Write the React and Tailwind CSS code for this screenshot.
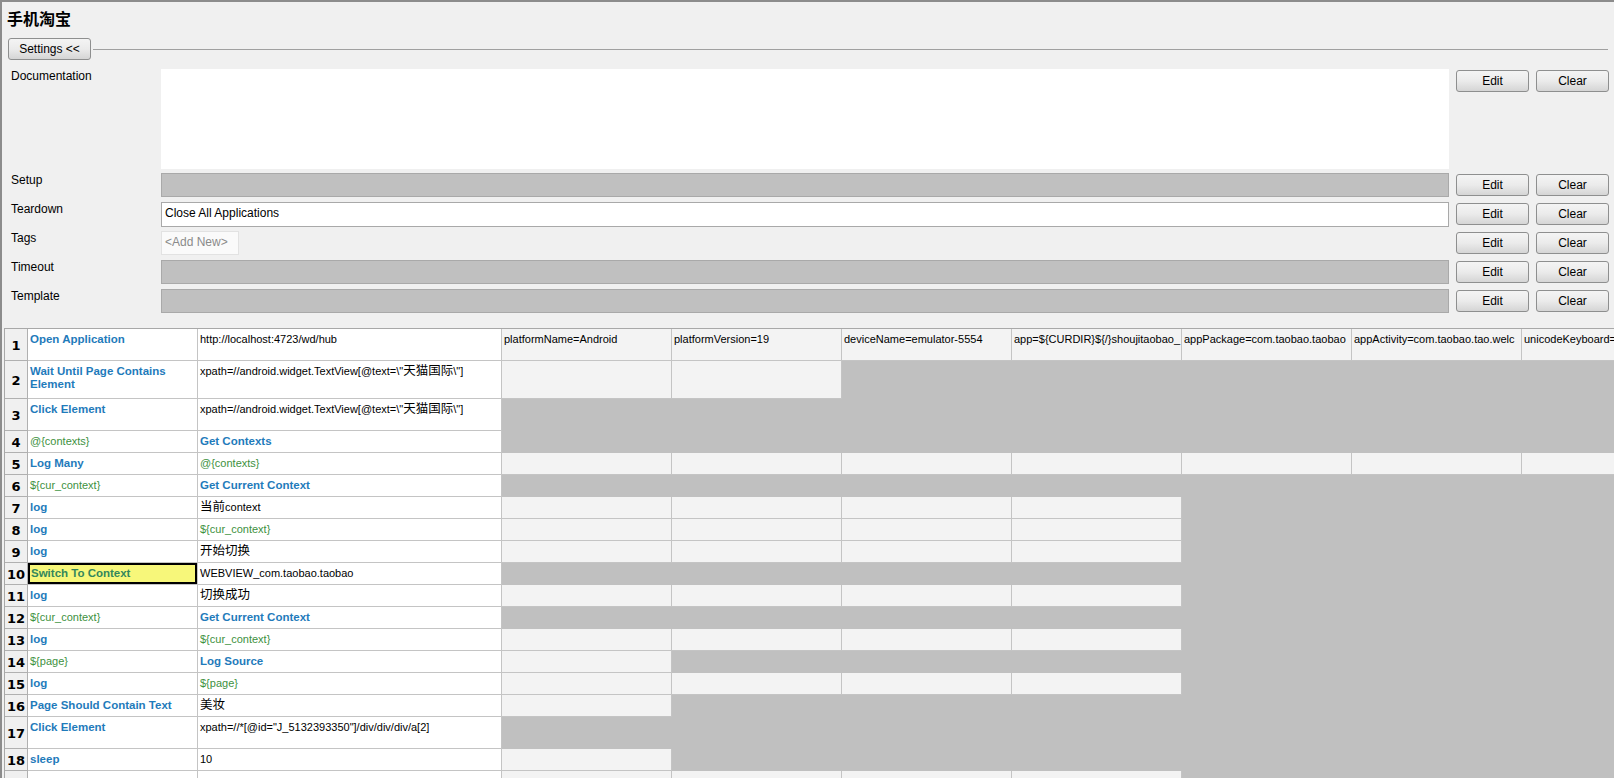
import React from 'react';

const K = (t) => ['kw', t];
const V = (t) => ['var', t];
const T = (t) => ['txt', t];

const rows = [
  { h: 'h-[32px]', active: 9, cells: [K('Open Application'), T('http://localhost:4723/wd/hub'), T('platformName=Android'), T('platformVersion=19'), T('deviceName=emulator-5554'), T('app=${CURDIR}${/}shoujitaobao_'), T('appPackage=com.taobao.taobao'), T('appActivity=com.taobao.tao.welc'), T('unicodeKeyboard=')] },
  { h: 'h-[38px]', active: 4, cells: [K('Wait Until Page Contains Element'), T('xpath=//android.widget.TextView[@text=\\"天猫国际\\"]')] },
  { h: 'h-[32px]', active: 2, cells: [K('Click Element'), T('xpath=//android.widget.TextView[@text=\\"天猫国际\\"]')] },
  { h: 'h-[22px]', active: 2, cells: [V('@{contexts}'), K('Get Contexts')] },
  { h: 'h-[22px]', active: 9, cells: [K('Log Many'), V('@{contexts}')] },
  { h: 'h-[22px]', active: 2, cells: [V('${cur_context}'), K('Get Current Context')] },
  { h: 'h-[22px]', active: 6, cells: [K('log'), T('当前context')] },
  { h: 'h-[22px]', active: 6, cells: [K('log'), V('${cur_context}')] },
  { h: 'h-[22px]', active: 6, cells: [K('log'), T('开始切换')] },
  { h: 'h-[22px]', active: 2, selected: true, cells: [K('Switch To Context'), T('WEBVIEW_com.taobao.taobao')] },
  { h: 'h-[22px]', active: 6, cells: [K('log'), T('切换成功')] },
  { h: 'h-[22px]', active: 2, cells: [V('${cur_context}'), K('Get Current Context')] },
  { h: 'h-[22px]', active: 6, cells: [K('log'), V('${cur_context}')] },
  { h: 'h-[22px]', active: 3, cells: [V('${page}'), K('Log Source')] },
  { h: 'h-[22px]', active: 6, cells: [K('log'), V('${page}')] },
  { h: 'h-[22px]', active: 3, cells: [K('Page Should Contain Text'), T('美妆')] },
  { h: 'h-[32px]', active: 2, cells: [K('Click Element'), T('xpath=//*[@id="J_5132393350"]/div/div/div/a[2]')] },
  { h: 'h-[22px]', active: 3, cells: [K('sleep'), T('10')] },
  { h: 'h-[22px]', active: 6, cells: [] },
];

const settings = [
  { label: 'Setup', kind: 'gray' },
  { label: 'Teardown', kind: 'text', value: 'Close All Applications' },
  { label: 'Tags', kind: 'tags' },
  { label: 'Timeout', kind: 'gray' },
  { label: 'Template', kind: 'gray' },
];

// chinese chars render a bit bigger than the latin text in the grid
function Mixed({ text }) {
  const parts = text.split(/([\u4e00-\u9fff]+)/);
  return parts.map((p, i) =>
    /[\u4e00-\u9fff]/.test(p) ? <span key={i} className="text-[12.5px]">{p}</span> : <React.Fragment key={i}>{p}</React.Fragment>
  );
}

function WinButton({ children, className = '' }) {
  return (
    <button className={`h-[22px] rounded-[3px] border border-[#8e8f8f] bg-linear-to-b from-[#f4f4f4] via-[#ebebeb] to-[#d5d5d5] text-[12px] text-black leading-none ${className}`}>
      {children}
    </button>
  );
}

function EditClear() {
  return (
    <div className="flex gap-[7px] ml-[7px] mt-[1px]">
      <WinButton className="w-[73px]">Edit</WinButton>
      <WinButton className="w-[73px]">Clear</WinButton>
    </div>
  );
}

function Cell({ cell, idx, active, selected }) {
  if (idx >= active) {
    return <div className="bg-[#c0c0c0] border-r border-b border-[#c0c0c0]" />;
  }
  const bg = idx < 2 ? 'bg-white' : 'bg-[#f3f3f3]';
  let content = null;
  if (cell) {
    const [type, text] = cell;
    if (type === 'kw') content = <span className={`font-bold text-[11.5px] ${selected ? 'text-[#33875c]' : 'text-[#1f7bbb]'}`}>{text}</span>;
    else if (type === 'var') content = <span className="text-[#3d9140]">{text}</span>;
    else content = <span className="text-black"><Mixed text={text} /></span>;
  }
  if (selected && idx === 0) {
    return (
      <div className="bg-[#f7f77a] border-r border-b border-[#c4c4c4] min-h-0">
        <div className="h-full border-2 border-black px-[1px] pt-[2px] leading-[13px] text-[11px] overflow-hidden whitespace-nowrap">{content}</div>
      </div>
    );
  }
  const wrap = idx < 2 ? 'whitespace-normal' : 'whitespace-nowrap';
  return (
    <div className={`${bg} min-h-0 border-r border-b border-[#c4c4c4] overflow-hidden px-[2px] pt-[4px] leading-[13px] text-[11px] ${wrap}`}>
      {content}
    </div>
  );
}

export default function App() {
  return (
    <div className="w-[1614px] h-[778px] overflow-hidden bg-[#f0f0f0] border-l-2 border-t-2 border-[#8c8c8c] font-['Liberation_Sans','Noto_Sans_CJK_SC',sans-serif] text-black">
      {/* title */}
      <div className="h-[36px] pl-[5px] pt-[4px]">
        <h1 className="text-[16px] font-bold leading-[24px] font-['Noto_Sans_CJK_SC',sans-serif]">手机淘宝</h1>
      </div>

      {/* settings toggle */}
      <div className="flex items-center pl-[6px] pr-[6px] h-[22px]">
        <WinButton className="w-[83px]">Settings &lt;&lt;</WinButton>
        <div className="flex-1 h-px bg-[#a0a0a0] ml-[2px]" />
      </div>

      {/* settings */}
      <div className="mt-[9px]">
        <div className="flex h-[100px] mb-[4px]">
          <div className="w-[159px] pl-[9px] text-[12px] leading-[14px]">Documentation</div>
          <div className="w-[1288px] h-[100px] bg-white" />
          <EditClear />
        </div>
        {settings.map((s) => (
          <div key={s.label} className="flex h-[24px] mb-[5px]">
            <div className="w-[159px] pl-[9px] text-[12px] leading-[14px]">{s.label}</div>
            <div className="w-[1288px]">
              {s.kind === 'gray' && <div className="h-[24px] bg-[#c0c0c0] border border-[#a9a9a9]" />}
              {s.kind === 'text' && (
                <div className="h-[25px] bg-white border border-[#a9a9a9] pl-[3px] pt-[3px] text-[12px] leading-[15px]">{s.value}</div>
              )}
              {s.kind === 'tags' && (
                <div className="w-[78px] h-[24px] bg-[#fafafa] border border-[#e2e2e2] text-[12px] text-[#8a8a8a] pl-[3px] pt-[3px] leading-[15px]">&lt;Add New&gt;</div>
              )}
            </div>
            <EditClear />
          </div>
        ))}
      </div>

      {/* table */}
      <div className="mt-[15px] ml-[2px] border-l border-t border-[#a8a8a8]">
        {rows.map((r, i) => (
          <div key={i} className={`grid grid-cols-[23px_170px_304px_170px_170px_170px_170px_170px_170px_170px] grid-rows-[100%] overflow-hidden ${r.h}`}>
            <div className="bg-[#f0f0f0] min-h-0 border-r border-b border-[#b0b0b0] flex items-center justify-center pt-[2px] font-['DejaVu_Sans',sans-serif] font-bold text-[13px] leading-[14px]">
              {i + 1}
            </div>
            {Array.from({ length: 9 }).map((_, j) => (
              <Cell key={j} cell={r.cells[j]} idx={j} active={r.active} selected={r.selected} />
            ))}
          </div>
        ))}
      </div>
    </div>
  );
}
